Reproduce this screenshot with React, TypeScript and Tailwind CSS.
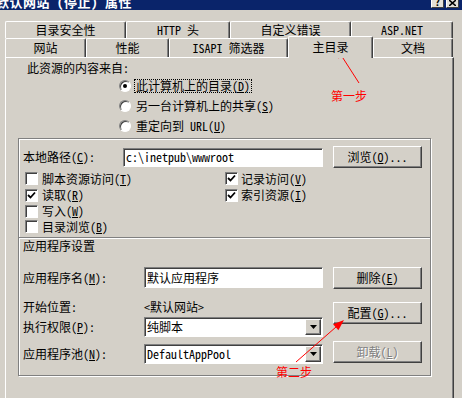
import React from "react";

const raised =
  "border border-t-white border-l-white border-r-[#404040] border-b-[#404040] shadow-[inset_-1px_-1px_0_#808080]";
const sunken =
  "border border-t-[#808080] border-l-[#808080] border-r-white border-b-white shadow-[inset_1px_1px_0_#404040]";

function U({ c }: { c: string }) {
  return (
    <span>
      (<u>{c}</u>)
    </span>
  );
}

function Tab({ cls, children, selected }: { cls: string; children: React.ReactNode; selected?: boolean }) {
  return (
    <div
      className={
        "flex items-center justify-center shrink-0 bg-[#d4d0c8] border-t border-l border-r border-t-white border-l-white border-r-[#404040] shadow-[inset_-1px_0_0_#808080] rounded-tl-[2px] rounded-tr-[2px] " +
        (selected ? "relative z-10 " : "mb-[1px] ") +
        cls
      }
    >
      {children}
    </div>
  );
}

function Radio({ checked }: { checked?: boolean }) {
  return (
    <div className="w-[12px] h-[12px] rounded-full bg-white border border-t-[#808080] border-l-[#808080] border-r-white border-b-white shadow-[inset_1px_1px_0_#404040] flex items-center justify-center shrink-0">
      {checked && <div className="w-[4px] h-[4px] rounded-full bg-black" />}
    </div>
  );
}

function Check({ checked }: { checked?: boolean }) {
  return (
    <div className={"w-[13px] h-[13px] bg-white shrink-0 flex items-center justify-center " + sunken}>
      {checked && (
        <svg width="9" height="9" viewBox="0 0 9 9">
          <polyline points="1,4 3.5,6.5 8,1.5" fill="none" stroke="#000" strokeWidth="1.8" />
        </svg>
      )}
    </div>
  );
}

function Btn({ children, disabled, cls }: { children: React.ReactNode; disabled?: boolean; cls: string }) {
  return (
    <div
      className={
        "w-[89px] h-[22px] flex items-center justify-center bg-[#d4d0c8] " +
        raised +
        " " +
        (disabled ? "text-[#808080] [text-shadow:1px_1px_0_#fff] " : "") +
        cls
      }
    >
      {children}
    </div>
  );
}

function Select({ value }: { value: string }) {
  return (
    <div className={"w-[179px] h-[20px] bg-white flex items-center " + sunken}>
      <span className="flex-1 pl-[2px]">{value}</span>
      <div className={"w-[16px] h-[16px] mr-[1px] bg-[#d4d0c8] flex items-center justify-center " + raised}>
        <svg width="7" height="4" viewBox="0 0 7 4">
          <polygon points="0,0 7,0 3.5,4" fill="#000" />
        </svg>
      </div>
    </div>
  );
}

const capBtn =
  "w-[13px] h-[8px] bg-[#e4e0d8] border-l border-r border-b border-l-white border-r-[#404040] border-b-[#404040] flex items-end justify-center overflow-hidden";

export default function App() {
  return (
    <div className="w-[462px] h-[398px] bg-[#d4d0c8] relative overflow-hidden text-black text-[12px] leading-[14px] font-['Noto_Sans_Mono_CJK_SC','Noto_Sans_CJK_SC',sans-serif]">
      {/* title bar */}
      <div className="h-[10px] bg-[#0a246a] flex items-start overflow-hidden">
        <span className="text-white font-bold text-[13px] tracking-[0.5px] ml-[-4px] mt-[-6px] leading-[16px] whitespace-nowrap">
          默认网站 (停止) 属性
        </span>
      </div>
      <div className="absolute top-0 right-[3px] z-20 flex gap-[2px]">
        <div className={capBtn}>
          <span className="text-[10px] font-bold leading-[10px] mb-[0px]">?</span>
        </div>
        <div className={capBtn}>
          <svg width="7" height="6" viewBox="0 0 7 6" className="mb-[1px]">
            <path d="M0 0 L7 6 M7 0 L0 6" stroke="#000" strokeWidth="1.6" />
          </svg>
        </div>
      </div>

      {/* tabs row 1 */}
      <div className="flex ml-[5px] mt-[11px] h-[17px]">
        <Tab cls="w-[121px] h-[17px]">目录安全性</Tab>
        <Tab cls="w-[104px] h-[17px]">HTTP 头</Tab>
        <Tab cls="w-[121px] h-[17px]">自定义错误</Tab>
        <Tab cls="w-[102px] h-[17px]">ASP.NET</Tab>
      </div>
      {/* tabs row 2 */}
      <div className="flex ml-[5px] mt-[-2px] h-[22px] items-end relative z-10">
        <Tab cls="w-[81px] h-[19px]">网站</Tab>
        <Tab cls="w-[83px] h-[19px]">性能</Tab>
        <Tab cls="w-[119px] h-[19px]">ISAPI 筛选器</Tab>
        <Tab cls="w-[85px] h-[22px] pb-[2px]" selected>
          主目录
        </Tab>
        <Tab cls="w-[80px] h-[19px]">文档</Tab>
      </div>

      {/* panel */}
      <div className="ml-[5px] mt-[-1px] w-[449px] h-[360px] border-l border-t border-r border-l-white border-t-white border-r-[#404040] shadow-[inset_-1px_0_0_#808080] flex flex-col">
        <div className="mt-[3px] ml-[21px] h-[14px]">此资源的内容来自:</div>
        <div className="ml-[113px] mt-[1px] flex flex-col">
          <div className="h-[20px] flex items-center gap-[3px]">
            <Radio checked />
            <span className="border border-dotted border-black px-[1px] leading-[12px]">
              此计算机上的目录<U c="D" />
            </span>
          </div>
          <div className="h-[20px] flex items-center gap-[4px]">
            <Radio />
            <span className="ml-[1px]">
              另一台计算机上的共享<U c="S" />
            </span>
          </div>
          <div className="h-[20px] flex items-center gap-[4px]">
            <Radio />
            <span className="ml-[1px]">
              重定向到 URL<U c="U" />
            </span>
          </div>
        </div>

        {/* group box */}
        <div className="ml-[12px] mt-[2px] w-[413px] h-[238px] border border-[#808080] shadow-[inset_1px_1px_0_#fff,1px_1px_0_#fff] flex flex-col">
          <div className="mt-[7px] ml-[4px] h-[22px] flex items-center">
            <span className="w-[100px]">
              本地路径<U c="C" />:
            </span>
            <div className={"w-[200px] h-[19px] bg-white flex items-center pl-[2px] " + sunken}>c:\inetpub\wwwroot</div>
            <Btn cls="ml-[10px]">
              浏览<U c="O" />...
            </Btn>
          </div>
          <div className="mt-[2px] ml-[6px] flex">
            <div className="w-[200px] flex flex-col">
              <div className="h-[17px] flex items-center gap-[4px]">
                <Check />
                <span>
                  脚本资源访问<U c="T" />
                </span>
              </div>
              <div className="h-[16px] flex items-center gap-[4px]">
                <Check checked />
                <span>
                  读取<U c="R" />
                </span>
              </div>
              <div className="h-[16px] flex items-center gap-[4px]">
                <Check />
                <span>
                  写入<U c="W" />
                </span>
              </div>
              <div className="h-[15px] flex items-center gap-[4px]">
                <Check />
                <span>
                  目录浏览<U c="B" />
                </span>
              </div>
            </div>
            <div className="flex flex-col">
              <div className="h-[17px] flex items-center gap-[3px]">
                <Check checked />
                <span>
                  记录访问<U c="V" />
                </span>
              </div>
              <div className="h-[16px] flex items-center gap-[3px]">
                <Check checked />
                <span>
                  索引资源<U c="I" />
                </span>
              </div>
            </div>
          </div>
          <div className="mt-[3px] h-[2px] border-t border-t-[#808080] border-b border-b-white" />
          <div className="ml-[4px] h-[14px]">应用程序设置</div>
          <div className="ml-[4px] flex">
            <div className="w-[300px] flex flex-col">
              <div className="mt-[14px] h-[21px] flex items-center">
                <span className="w-[121px]">
                  应用程序名<U c="M" />:
                </span>
                <div className={"w-[179px] h-[21px] bg-white flex items-center pl-[2px] " + sunken}>默认应用程序</div>
              </div>
              <div className="mt-[9px] h-[20px] flex items-center">
                <span className="w-[121px]">开始位置:</span>
                <span>&lt;默认网站&gt;</span>
              </div>
              <div className="h-[20px] flex items-center">
                <span className="w-[121px]">
                  执行权限<U c="P" />:
                </span>
                <Select value="纯脚本" />
              </div>
              <div className="mt-[6px] h-[21px] flex items-center">
                <span className="w-[121px]">
                  应用程序池<U c="N" />:
                </span>
                <Select value="DefaultAppPool" />
              </div>
            </div>
            <div className="ml-[10px] flex flex-col">
              <Btn cls="mt-[14px]">
                删除<U c="E" />
              </Btn>
              <Btn cls="mt-[13px]">
                配置<U c="G" />...
              </Btn>
              <Btn cls="mt-[17px]" disabled>
                卸载<U c="L" />
              </Btn>
            </div>
          </div>
        </div>
      </div>

      {/* annotations */}
      <span className="absolute left-[331px] top-[89px] text-[#ff0000]">第一步</span>
      <span className="absolute left-[276px] top-[365px] text-[#ff0000]">第二步</span>
      <svg className="absolute inset-0 pointer-events-none" width="462" height="398" viewBox="0 0 462 398">
        <line x1="359" y1="83" x2="341" y2="55" stroke="#ff0000" strokeWidth="1" />
        <polygon points="336,47 345.3,54.1 338.5,58.4" fill="#ff0000" />
        <line x1="296" y1="362" x2="336" y2="327" stroke="#ff0000" strokeWidth="1" />
        <polygon points="344,320 338.4,330.2 333.1,324.2" fill="#ff0000" />
      </svg>
    </div>
  );
}
